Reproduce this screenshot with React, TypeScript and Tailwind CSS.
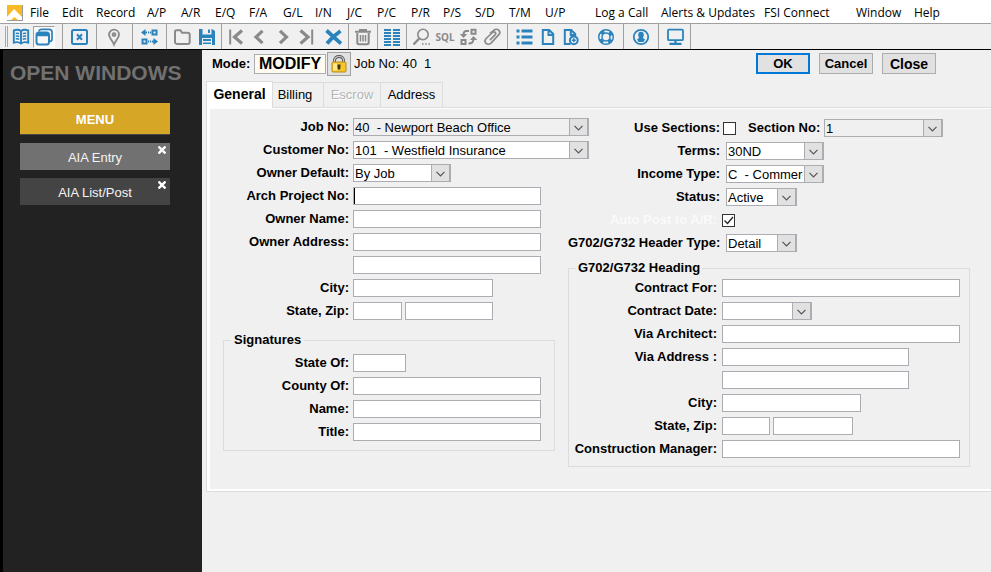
import React from "react";

const BLUE = "#2b83bd";
const GRAY = "#8a8a8a";

type MenuEntry = { label: string; width: string };

const menuEntries: MenuEntry[] = [
  { label: "File", width: "w-8" },
  { label: "Edit", width: "w-[34px]" },
  { label: "Record", width: "w-[51px]" },
  { label: "A/P", width: "w-[34px]" },
  { label: "A/R", width: "w-[34px]" },
  { label: "E/Q", width: "w-[34px]" },
  { label: "F/A", width: "w-[34px]" },
  { label: "G/L", width: "w-8" },
  { label: "I/N", width: "w-8" },
  { label: "J/C", width: "w-[30px]" },
  { label: "P/C", width: "w-[34px]" },
  { label: "P/R", width: "w-8" },
  { label: "P/S", width: "w-8" },
  { label: "S/D", width: "w-[34px]" },
  { label: "T/M", width: "w-9" },
  { label: "U/P", width: "w-[50px]" },
  { label: "Log a Call", width: "w-[66px]" },
  { label: "Alerts & Updates", width: "w-[103px]" },
  { label: "FSI Connect", width: "w-[92px]" },
  { label: "Window", width: "w-[58px]" },
  { label: "Help", width: "w-8" },
];

function Icon({ color, children }: { color: string; children: React.ReactNode }) {
  return (
    <svg width="20" height="20" viewBox="0 0 20 20" fill="none" stroke={color} strokeWidth="2" aria-hidden="true">
      {children}
    </svg>
  );
}

const icons = {
  book: (
    <Icon color={BLUE}>
      <path d="M2.800 3.500C5 2.600 8 2.600 10 4c2-1.400 5-1.400 7.200-.5v12.200c-2.200-.7-5.200-.7-7.200.8-2-1.500-5-1.500-7.200-.8zM10 4v12.500" strokeWidth="1.900" />
      <path d="M4.800 6.400c1.200-.3 2.400-.2 3.400.3M4.800 9.200c1.200-.3 2.400-.2 3.400.3M4.800 12c1.200-.3 2.400-.2 3.400.3M15.200 6.400c-1.200-.3-2.400-.2-3.400.3M15.200 9.200c-1.200-.3-2.400-.2-3.400.3M15.200 12c-1.200-.3-2.400-.2-3.400.3" strokeWidth="1.500" />
    </Icon>
  ),
  windows: (
    <Icon color={BLUE}>
      <path d="M5 4.500C5 3 6 2.300 7.500 2.300H15C17 2.300 18 3.300 18 5V12c0 1.500-.8 2.300-2 2.300" strokeWidth="1.700" />
      <rect x="2.500" y="5.500" width="12.500" height="12" rx="2.500" />
      <path d="M3 7.500h11.500" strokeWidth="3.500" />
    </Icon>
  ),
  closeBox: (
    <Icon color={BLUE}>
      <rect x="2" y="3" width="15" height="14" rx="1.500" />
      <path d="M7 7.300l5 5.400M12 7.300l-5 5.400" />
    </Icon>
  ),
  pin: (
    <Icon color={GRAY}>
      <path d="M9 17.500C7.500 13.500 4 11 4 7.600a5 5 0 0 1 10 0C14 11 10.500 13.500 9 17.500z" strokeWidth="1.900" />
      <circle cx="9" cy="7.600" r="1.400" />
    </Icon>
  ),
  nodes: (
    <Icon color={BLUE}>
      <rect x="12.500" y="3.500" width="4" height="4" />
      <rect x="2.500" y="12.500" width="4" height="4" />
      <path d="M5 5.500h2M8 5.500h1.200M10 5.500h1.200M8 14.500h1.200M10 14.500h1.200M12 14.500h2" />
      <path d="M1 5.500l4.500-3.500v7zM18 14.500L13.500 11v7z" fill={BLUE} stroke="none" />
    </Icon>
  ),
  folder: (
    <Icon color={GRAY}>
      <path d="M3 5c0-1.200.5-1.800 1.500-1.800h4L10 5.700h5.500c1.500 0 2.200.8 2.200 2V15c0 1.300-.7 1.900-1.900 1.900H5c-1.300 0-2-.7-2-1.900z" />
    </Icon>
  ),
  save: (
    <Icon color={BLUE}>
      <path d="M3 2h13l3 2v14H3z" fill={BLUE} stroke="none" />
      <path d="M6.500 2h9v5.500h-9zM6 11h10v7H6z" fill="#f0f0f0" stroke="none" />
      <path d="M12 2.500h2v3.500h-2zM7 12h8v2H7zM7 15.500h8V17H7z" fill={BLUE} stroke="none" />
    </Icon>
  ),
  first: (
    <Icon color={GRAY}>
      <path d="M3.200 2.500v15" />
      <path d="M15 3.500L7.500 10l7.500 6.500" strokeWidth="3.200" />
    </Icon>
  ),
  previous: (
    <Icon color={GRAY}>
      <path d="M11.500 3.800L5 10l6.500 6.200" strokeWidth="3.200" />
    </Icon>
  ),
  next: (
    <Icon color={GRAY}>
      <path d="M5 3.800l6.500 6.200L5 16.200" strokeWidth="3.200" />
    </Icon>
  ),
  last: (
    <Icon color={GRAY}>
      <path d="M1.500 3.500L9 10l-7.500 6.500" strokeWidth="3.200" />
      <path d="M13.200 2.500v15" />
    </Icon>
  ),
  remove: (
    <Icon color={BLUE}>
      <path d="M3.500 3.500c4 3.500 9 8.500 14.500 13M17.500 4C12.500 7.500 8 11.500 4 16.500" strokeWidth="3.800" />
    </Icon>
  ),
  trash: (
    <Icon color={GRAY}>
      <path d="M2 4.800h16M7 4.500V3h6v1.500" />
      <path d="M4.300 6v9.500c0 1.200.6 1.700 1.700 1.700h8c1.100 0 1.700-.5 1.700-1.700V6" />
      <path d="M7.500 8v6.500M10 8v6.500M12.500 8v6.500" strokeWidth="1.500" />
    </Icon>
  ),
  table: (
    <Icon color={BLUE}>
      <path d="M2 3h7M2 6h7M2 9h7M2 12h7M2 15h7M2 18h7M11 3h7M11 6h7M11 9h7M11 12h7M11 15h7M11 18h7" />
    </Icon>
  ),
  search: (
    <Icon color={GRAY}>
      <circle cx="12" cy="7.500" r="5.200" strokeWidth="1.600" />
      <path d="M8.200 11.500L2.500 17.500" strokeWidth="2.400" />
      <path d="M11 17h1.600M14.200 17h1.600M17.400 17H19" strokeWidth="1.700" />
    </Icon>
  ),
  swap: (
    <Icon color={GRAY}>
      <rect x="12.500" y="2.800" width="4" height="4" />
      <rect x="2.500" y="13" width="4" height="4" />
      <path d="M10 4H7.500C5 4 4.500 5.500 4.500 8M9.500 16.500c4 0 5-1.500 5-4.500" />
      <path d="M.8 7h7.400L4.500 11zM11 13l3.500-4 3.700 4z" fill={GRAY} stroke="none" />
    </Icon>
  ),
  clip: (
    <Icon color={GRAY}>
      <path d="M7 6.500l3.800-3.200c1.500-1.300 3.800-1.200 5 0s1.200 3 0 4.300l-7.500 8.200c-1.500 1.500-4 1.800-5.300.5s-1.200-3.300.2-4.800l6.200-6c.9-.8 2.200-.8 2.800-.1s.6 1.600-.2 2.500l-5.100 5.200" strokeWidth="1.700" />
    </Icon>
  ),
  list: (
    <Icon color={BLUE}>
      <path d="M2.500 4h3M7.500 4h11M2.500 10h3M7.500 10h11M2.500 16h3M7.500 16h11" strokeWidth="3" />
    </Icon>
  ),
  page: (
    <Icon color={BLUE}>
      <path d="M4.800 3h6.400l4 4v10H4.800zM10.500 3v5h4.700" />
    </Icon>
  ),
  pageAdd: (
    <Icon color={BLUE}>
      <path d="M8.500 17H2.800V3h6.400l4 4v2M8.800 3v5h4.400" />
      <circle cx="11.800" cy="13.300" r="3.900" />
      <path d="M9.800 13.300h4M11.800 11.300v4" strokeWidth="1.500" />
    </Icon>
  ),
  lifebuoy: (
    <Icon color={BLUE}>
      <circle cx="10" cy="10" r="7.300" strokeWidth="1.500" />
      <circle cx="10" cy="10" r="4" strokeWidth="1.500" />
      <circle cx="10" cy="10" r="5.700" strokeWidth="3.200" strokeDasharray="4 4.950" strokeDashoffset="-2.500" />
    </Icon>
  ),
  user: (
    <Icon color={BLUE}>
      <circle cx="10" cy="10" r="7.200" strokeWidth="1.800" />
      <path d="M10 4.800c1.800 0 2.800 1.200 2.800 3 0 1.500-.5 2.500-1 3l2.200 1.700-1.500 2.500h-5L6 12.500l2.200-1.700c-.5-.5-1-1.500-1-3 0-1.800 1-3 2.800-3z" fill={BLUE} stroke="none" />
    </Icon>
  ),
  monitor: (
    <Icon color={BLUE}>
      <rect x="3" y="2.700" width="15" height="10.500" rx="1" strokeWidth="1.800" />
      <path d="M10.500 13v3M4.500 16.800h12" strokeWidth="2.200" />
    </Icon>
  ),
};

type Tool = { label: string; icon?: React.ReactNode };

const toolGroups: { width: string; tools: Tool[] }[] = [
  { width: "w-[34px]", tools: [{ label: "Close window", icon: icons.closeBox }] },
  { width: "w-9", tools: [{ label: "Locate", icon: icons.pin }] },
  { width: "w-[34px]", tools: [{ label: "Links", icon: icons.nodes }] },
  { width: "w-[55px]", tools: [{ label: "Open", icon: icons.folder }, { label: "Save", icon: icons.save }] },
  {
    width: "w-[127px]",
    tools: [
      { label: "First", icon: icons.first },
      { label: "Previous", icon: icons.previous },
      { label: "Next", icon: icons.next },
      { label: "Last", icon: icons.last },
      { label: "Clear", icon: icons.remove },
    ],
  },
  { width: "w-[29px]", tools: [{ label: "Delete", icon: icons.trash }] },
  { width: "w-[29px]", tools: [{ label: "Grid", icon: icons.table }] },
  {
    width: "w-[101px]",
    tools: [
      { label: "Search", icon: icons.search },
      { label: "SQL" },
      { label: "Exchange", icon: icons.swap },
      { label: "Attach", icon: icons.clip },
    ],
  },
  {
    width: "w-[81px]",
    tools: [
      { label: "List", icon: icons.list },
      { label: "New page", icon: icons.page },
      { label: "Add page", icon: icons.pageAdd },
    ],
  },
  { width: "w-[35px]", tools: [{ label: "Help", icon: icons.lifebuoy }] },
  { width: "w-[35px]", tools: [{ label: "User", icon: icons.user }] },
  { width: "w-8", tools: [{ label: "Screen", icon: icons.monitor }] },
];

function MenuBar() {
  return (
    <nav className="flex h-[23px] items-center bg-white pt-0.5 pl-[7px] font-['Open_Sans','Noto_Sans',sans-serif] text-[12px]">
      <svg width="16" height="16" viewBox="0 0 16 16" className="mr-[7px] shrink-0" aria-hidden="true">
        <rect width="16" height="16" fill="#9a9a9a" />
        <rect width="15" height="15" fill="#fbb827" />
        <path d="M0 12l7-8 8 8v3h-4l-3.500-3L4 15H0z" fill="#fff" />
      </svg>
      {menuEntries.map((m) => (
        <button key={m.label} type="button" className={`${m.width} shrink-0 text-left leading-5 whitespace-nowrap`}>
          {m.label}
        </button>
      ))}
    </nav>
  );
}

function Toolbar() {
  return (
    <div role="toolbar" aria-label="Tools" className="flex h-[27px] border-t border-b border-t-[#a0a0a0] border-b-black bg-[#f0f0f0]">
      <div className="my-0.5 ml-[5px] w-[3px] border-x border-[#a8a8a8]" />
      <div className="flex w-[55px] items-center border-r border-[#a0a0a0]">
        <button type="button" aria-label="Ledger" className="flex w-[25px] justify-center">
          {icons.book}
        </button>
        <button
          type="button"
          aria-label="Windows"
          className="flex h-[22px] w-[22px] items-center justify-center border border-t-[#a0a0a0] border-r-white border-b-white border-l-[#a0a0a0] bg-[#f8f8f8]"
        >
          {icons.windows}
        </button>
      </div>
      {toolGroups.map((g) => (
        <div key={g.tools[0].label} className={`${g.width} flex shrink-0 items-center justify-center border-r border-[#a0a0a0]`}>
          {g.tools.map((t) => (
            <button
              key={t.label}
              type="button"
              aria-label={t.label}
              className="flex w-6 shrink-0 justify-center font-['Liberation_Sans_Narrow','Noto_Sans',sans-serif] text-[10px] leading-5 font-bold text-[#8a8a8a]"
            >
              {t.icon ?? t.label}
            </button>
          ))}
        </div>
      ))}
    </div>
  );
}

function OpenWindow({ title, tone }: { title: string; tone: string }) {
  return (
    <div className={`${tone} relative h-[27px] w-full`}>
      <button type="button" className="h-full w-full pt-0.5 text-center text-[13px] text-[#f4f4f4]">
        {title}
      </button>
      <button type="button" aria-label={`Close ${title}`} className="absolute top-[3px] right-1 flex">
        <svg width="8" height="8" viewBox="0 0 8 8" stroke="#fff" strokeWidth="2.400" aria-hidden="true">
          <path d="M.5.500l7 7M7.500.500l-7 7" />
        </svg>
      </button>
    </div>
  );
}

function Sidebar() {
  return (
    <aside className="w-[202px] shrink-0 border-l-[3px] border-black bg-[#222222]">
      <h2 className="mt-[9px] pl-[7px] text-[21px] leading-7 font-bold whitespace-nowrap text-[#717171]">OPEN WINDOWS</h2>
      <div className="mt-4 mr-8 ml-[17px] flex flex-col gap-2">
        <button type="button" className="h-8 border-b border-[#4a4a4a] bg-[#d6a626] pt-0.5 text-[13px] font-bold text-white">
          MENU
        </button>
        <OpenWindow title="AIA Entry" tone="bg-[#717171]" />
        <OpenWindow title="AIA List/Post" tone="bg-[#444444]" />
      </div>
    </aside>
  );
}

type RowProps = { label?: string; id?: string; labelWidth: string; children: React.ReactNode };

function Row({ label, id, labelWidth, children }: RowProps) {
  return (
    <div className="flex h-[18px] items-center">
      <label htmlFor={id} className={`${labelWidth} shrink-0 text-right font-bold whitespace-nowrap`}>
        {label}
      </label>
      {children}
    </div>
  );
}

function TextBox({ id, label, width }: { id?: string; label?: string; width: string }) {
  return <input id={id} aria-label={label} type="text" className={`${width} h-[18px] min-w-0 border border-[#abadb3] bg-white px-0.5 outline-none`} />;
}

type ComboProps = { id: string; value: string; width: string; disabled?: boolean };

function Combo({ id, value, width, disabled }: ComboProps) {
  return (
    <span className={`${width} relative h-[18px] shrink-0`}>
      <select
        id={id}
        disabled={disabled}
        className="block h-full w-full appearance-none border border-[#abadb3] bg-white pr-5 pl-px text-black opacity-100 outline-none disabled:bg-[#f0f0f0]"
      >
        <option>{value}</option>
      </select>
      <span className="pointer-events-none absolute inset-y-0 right-0 flex w-5 items-center justify-center border border-r-2 border-[#abadb3] bg-[#e1e1e1] pt-0.5">
        <svg width="9" height="6" viewBox="0 0 9 6" fill="none" stroke="#555" strokeWidth="1.200" aria-hidden="true">
          <path d="M.5.800l4 4 4-4" />
        </svg>
      </span>
    </span>
  );
}

function CheckBox({ id, checked }: { id: string; checked?: boolean }) {
  return (
    <span className="relative flex h-[13px] w-[13px] shrink-0">
      <input
        id={id}
        type="checkbox"
        defaultChecked={checked}
        className="peer h-[13px] w-[13px] appearance-none border border-[#333] bg-white"
      />
      <svg
        width="13"
        height="13"
        viewBox="0 0 13 13"
        fill="none"
        stroke="#222"
        strokeWidth="1.300"
        className="pointer-events-none absolute inset-0 hidden peer-checked:block"
        aria-hidden="true"
      >
        <path d="M2.500 6.500l3 3 5.500-6.500" />
      </svg>
    </span>
  );
}

function LeftColumn() {
  const lw = "w-[139px] mr-1";
  const sw = "w-[125px] mr-1";
  return (
    <div className="w-[358px] shrink-0 pt-[9px]">
      <div className="flex flex-col gap-[5px]">
        <Row label="Job No:" id="job" labelWidth={lw}>
          <Combo id="job" value={"40\u00a0 - Newport Beach Office"} width="w-[236px]" disabled />
        </Row>
        <Row label="Customer No:" id="customer" labelWidth={lw}>
          <Combo id="customer" value={"101\u00a0 - Westfield Insurance"} width="w-[236px]" />
        </Row>
        <Row label="Owner Default:" id="owner-default" labelWidth={lw}>
          <Combo id="owner-default" value="By Job" width="w-[98px]" />
        </Row>
        <Row label="Arch Project No:" id="arch" labelWidth={lw}>
          <span className="relative flex">
            <TextBox id="arch" width="w-[188px]" />
            <span className="absolute top-px left-px h-4 w-px bg-black" />
          </span>
        </Row>
        <Row label="Owner Name:" id="owner-name" labelWidth={lw}>
          <TextBox id="owner-name" width="w-[188px]" />
        </Row>
        <Row label="Owner Address:" id="owner-address" labelWidth={lw}>
          <TextBox id="owner-address" width="w-[188px]" />
        </Row>
        <Row labelWidth={lw}>
          <TextBox label="Owner Address line 2" width="w-[188px]" />
        </Row>
        <Row label="City:" id="city" labelWidth={lw}>
          <TextBox id="city" width="w-[140px]" />
        </Row>
        <Row label="State, Zip:" id="state" labelWidth={lw}>
          <div className="flex gap-[3px]">
            <TextBox id="state" width="w-[49px]" />
            <TextBox label="Zip" width="w-[88px]" />
          </div>
        </Row>
      </div>
      <fieldset className="mt-[11px] ml-[13px] w-[332px] border border-[#dcdcdc] pb-[9px]">
        <legend className="ml-[7px] h-[18px] px-[3px] leading-[18px] font-bold">Signatures</legend>
        <div className="flex flex-col gap-[5px] pt-[5px]">
          <Row label="State Of:" id="state-of" labelWidth={sw}>
            <TextBox id="state-of" width="w-[53px]" />
          </Row>
          <Row label="County Of:" id="county-of" labelWidth={sw}>
            <TextBox id="county-of" width="w-[188px]" />
          </Row>
          <Row label="Name:" id="sig-name" labelWidth={sw}>
            <TextBox id="sig-name" width="w-[188px]" />
          </Row>
          <Row label="Title:" id="sig-title" labelWidth={sw}>
            <TextBox id="sig-title" width="w-[188px]" />
          </Row>
        </div>
      </fieldset>
    </div>
  );
}

function RightColumn() {
  const lw = "w-[152px] mr-1.5";
  const cw = "w-[152px] mr-[3px]";
  const hw = "w-[148px] mr-[5px]";
  return (
    <div className="min-w-0 flex-1 pt-[10px]">
      <div className="flex flex-col gap-[5px]">
        <Row label="Use Sections:" id="use-sections" labelWidth={cw}>
          <CheckBox id="use-sections" />
          <label htmlFor="section-no" className="mr-1 ml-3 w-[72px] shrink-0 text-right font-bold whitespace-nowrap">
            Section No:
          </label>
          <Combo id="section-no" value="1" width="w-[119px]" disabled />
        </Row>
        <Row label="Terms:" id="terms" labelWidth={lw}>
          <Combo id="terms" value="30ND" width="w-[98px]" />
        </Row>
        <Row label="Income Type:" id="income" labelWidth={lw}>
          <Combo id="income" value={"C\u00a0 - Commercial"} width="w-[98px]" />
        </Row>
        <Row label="Status:" id="status" labelWidth={lw}>
          <Combo id="status" value="Active" width="w-[71px]" />
        </Row>
        <div className="text-[#fafafa]">
          <Row label="Auto Post to A/R:" id="auto-post" labelWidth="w-[149px] mr-[5px]">
            <CheckBox id="auto-post" checked />
          </Row>
        </div>
        <Row label="G702/G732 Header Type:" id="header-type" labelWidth={lw}>
          <Combo id="header-type" value="Detail" width="w-[71px]" />
        </Row>
      </div>
      <fieldset className="mt-[7px] w-[402px] border border-[#dcdcdc] pb-2">
        <legend className="ml-[7px] h-[18px] px-0.5 leading-[18px] font-bold">G702/G732 Heading</legend>
        <div className="flex flex-col gap-[5px] pt-0.5">
          <Row label="Contract For:" id="contract-for" labelWidth={hw}>
            <TextBox id="contract-for" width="w-[238px]" />
          </Row>
          <Row label="Contract Date:" id="contract-date" labelWidth={hw}>
            <Combo id="contract-date" value="" width="w-[90px]" />
          </Row>
          <Row label="Via Architect:" id="via-architect" labelWidth={hw}>
            <TextBox id="via-architect" width="w-[238px]" />
          </Row>
          <Row label="Via Address :" id="via-address" labelWidth={hw}>
            <TextBox id="via-address" width="w-[187px]" />
          </Row>
          <Row labelWidth={hw}>
            <TextBox label="Via Address line 2" width="w-[187px]" />
          </Row>
          <Row label="City:" id="via-city" labelWidth={hw}>
            <TextBox id="via-city" width="w-[139px]" />
          </Row>
          <Row label="State, Zip:" id="via-state" labelWidth={hw}>
            <div className="flex gap-[3px]">
              <TextBox id="via-state" width="w-12" />
              <TextBox label="Via Zip" width="w-20" />
            </div>
          </Row>
          <Row label="Construction Manager:" id="manager" labelWidth={hw}>
            <TextBox id="manager" width="w-[238px]" />
          </Row>
        </div>
      </fieldset>
    </div>
  );
}

function HeaderRow() {
  const button = "h-[21px] w-[54px] bg-[#e1e1e1] font-bold";
  return (
    <div className="flex h-[26px] items-center pt-px pl-[10px]">
      <label htmlFor="mode" className="w-[42px] shrink-0 font-bold">
        Mode:
      </label>
      <input
        id="mode"
        type="text"
        readOnly
        defaultValue="MODIFY"
        className="h-5 w-[72px] shrink-0 border border-[#abadb3] bg-[#fffbf0] text-center text-[16px] leading-[18px] font-bold outline-none"
      />
      <button
        type="button"
        aria-label="Lock"
        className="ml-px flex h-[24px] w-6 shrink-0 items-center justify-center border border-[#a0a0a0] bg-[#e1e1e1]"
      >
        <svg width="16" height="18" viewBox="0 0 16 18" fill="none" aria-hidden="true">
          <path d="M3.500 8V5.500C3.500 3 5.500 1.500 8 1.500s4.500 1.500 4.500 4V8" stroke="#555" strokeWidth="3" />
          <path d="M3.500 8V5.500C3.500 3 5.500 1.500 8 1.500s4.500 1.500 4.500 4V8" stroke="#c9c9c9" strokeWidth="1.200" />
          <rect x="1" y="7" width="14" height="10" rx="1" fill="#f5c52c" stroke="#b98a10" />
          <path d="M2 8.500h4v7H2z" fill="#fde98a" />
          <path d="M6.500 9.500h3v2.500l-.5 2.500H7L6.500 12z" fill="#443300" />
        </svg>
      </button>
      <span className="ml-[3px] whitespace-pre">{"Job No: 40  1"}</span>
      <div className="mr-[55px] ml-auto flex gap-[9px]">
        <button type="button" className={`${button} border-2 border-[#0078d7]`}>
          OK
        </button>
        <button type="button" className={`${button} border border-[#adadad]`}>
          Cancel
        </button>
        <button type="button" className={`${button} border border-[#adadad] text-[14px]`}>
          Close
        </button>
      </div>
    </div>
  );
}

function Tabs() {
  const tab = "h-[25px] border-t border-r border-[#dcdcdc]";
  return (
    <div role="tablist" className="relative mt-[5px] -mb-px ml-1 flex items-end">
      <button
        type="button"
        role="tab"
        aria-selected="true"
        className="h-[27px] w-[67px] border border-b-0 border-[#dcdcdc] bg-white pb-0.5 text-[14px] font-bold"
      >
        General
      </button>
      <div className="flex border-b border-[#dcdcdc]">
        <button type="button" role="tab" aria-selected="false" className={`${tab} w-[51px] pr-1.5`}>
          Billing
        </button>
        <button
          type="button"
          role="tab"
          aria-selected="false"
          disabled
          className={`${tab} w-[57px] text-[#b4b4b4] [text-shadow:1px_1px_0_#fff]`}
        >
          Escrow
        </button>
        <button type="button" role="tab" aria-selected="false" className={`${tab} w-[62px]`}>
          Address
        </button>
      </div>
    </div>
  );
}

export default function App() {
  return (
    <div className="flex min-h-screen flex-col overflow-hidden bg-[#f0f0f0] font-['Liberation_Sans',Arial,sans-serif] text-[13px] leading-[18px] text-black">
      <MenuBar />
      <Toolbar />
      <div className="flex flex-1">
        <Sidebar />
        <main className="min-w-0 flex-1">
          <HeaderRow />
          <Tabs />
          <div className="ml-1 border border-r-0 border-[#dcdcdc] bg-white pt-px pb-0.5 pl-[3px]">
            <form className="flex bg-[#f0f0f0] pb-[22px]" onSubmit={(e) => e.preventDefault()}>
              <LeftColumn />
              <RightColumn />
            </form>
          </div>
        </main>
      </div>
    </div>
  );
}
